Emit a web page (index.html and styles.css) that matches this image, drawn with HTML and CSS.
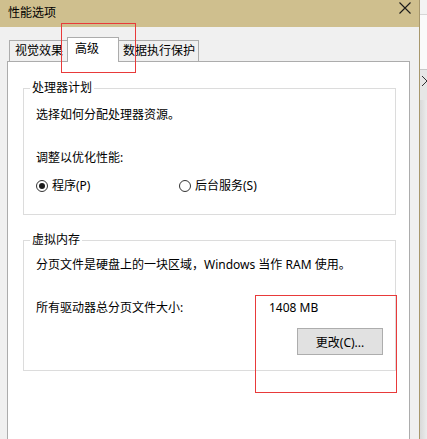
FILE: index.html
```html
<!DOCTYPE html>
<html lang="zh-CN">
<head>
<meta charset="utf-8">
<title>性能选项</title>
<link rel="stylesheet" href="styles.css">
</head>
<body>
<div class="screen">
  <div class="window">
    <div class="titlebar">
      <span class="title">性能选项</span>
      <svg class="close" width="12" height="12" viewBox="0 0 12 12"><path d="M0.5 0.5 L11.5 11.5 M11.5 0.5 L0.5 11.5" stroke="#1a1a1a" stroke-width="1.1" fill="none"/></svg>
    </div>
    <div class="client">
      <div class="tabs">
        <div class="tab tab-first">视觉效果</div>
        <div class="tab tab-active">高级</div>
        <div class="tab tab-last">数据执行保护</div>
      </div>
      <div class="panel">
        <fieldset class="group group-cpu">
          <legend>处理器计划</legend>
          <p class="row">选择如何分配处理器资源。</p>
          <p class="row row-gap">调整以优化性能:</p>
          <div class="row radios">
            <label class="radio radio-first"><span class="dot checked"></span>程序(P)</label>
            <label class="radio"><span class="dot"></span>后台服务(S)</label>
          </div>
        </fieldset>
        <fieldset class="group group-vm">
          <legend>虚拟内存</legend>
          <p class="row">分页文件是硬盘上的一块区域，Windows 当作 RAM 使用。</p>
          <div class="row row-gap size-row"><span class="size-label">所有驱动器总分页文件大小:</span><span>1408 MB</span></div>
          <div class="btn-row"><button class="btn">更改(C)...</button></div>
        </fieldset>
      </div>
    </div>
  </div>
  <div class="outside">
    <div class="seg seg1"></div>
    <div class="seg seg2"></div>
    <div class="seg seg3"><svg width="7" height="12" viewBox="0 0 7 12"><path d="M1 1 L6 6 L1 11" stroke="#333" stroke-width="1" fill="none"/></svg></div>
    <div class="seg seg4"></div>
  </div>
  <div class="mark mark-tab"></div>
  <div class="mark mark-size"></div>
</div>
</body>
</html>
```

FILE: styles.css
```css
* { box-sizing: border-box; }
html, body { margin: 0; padding: 0; }
body {
  font-family: "Noto Sans", "Noto Sans CJK SC", sans-serif;
  font-size: 12px;
  color: #000;
  background: #f0f0f0;
}
.screen {
  position: relative;
  display: flex;
  width: 427px;
  height: 439px;
  overflow: hidden;
}
.window {
  width: 420px;
  display: flex;
  flex-direction: column;
  border-right: 1px solid #a7976c;
}
.titlebar {
  height: 27px;
  background: #cfbf8e;
  display: flex;
  align-items: center;
  justify-content: space-between;
  padding: 0 8px 1px 8px;
}
.title { line-height: 16px; }
.close { margin-bottom: 10px; margin-right: 0; }
.client {
  flex: 1;
  background: #f0f0f0;
  padding: 10px 9px 0 7px;
  display: flex;
  flex-direction: column;
}
.tabs {
  display: flex;
  align-items: flex-end;
  margin-left: 2px;
  height: 24px;
}
.tab {
  height: 21px;
  line-height: 19px;
  border: 1px solid #acacac;
  border-bottom: none;
  background: #f0f0f0;
  white-space: nowrap;
}
.tab-first { width: 58px; border-right: none; padding-left: 5px; }
.tab-active {
  width: 52px;
  height: 25px;
  line-height: 22px;
  padding-left: 7px;
  background: #fff;
  margin-bottom: -1px;
  position: relative;
  z-index: 1;
}
.tab-last { width: 80px; border-left: none; padding-left: 4px; }
.panel {
  flex: 1;
  background: #fff;
  border: 1px solid #acacac;
  border-bottom: none;
  display: flex;
  flex-direction: column;
}
.group {
  margin: 18px 13px 0 15px;
  border: 1px solid #dcdcdc;
  min-width: 0;
}
.group legend {
  padding: 0 2px;
  margin-left: -6px;
  line-height: 16px;
}
.group-cpu { padding: 11px 12px 20px 12px; }
.group-vm { margin-top: 17px; padding: 9px 12px 15px 12px; }
.row { margin: 0; line-height: 16px; height: 16px; white-space: nowrap; }
.row-gap { margin-top: 27px; }
.radios { display: flex; align-items: center; margin-top: 12px; }
.radio { display: flex; align-items: center; gap: 4px; }
.radio-first { width: 143px; }
.dot {
  width: 12px;
  height: 12px;
  border-radius: 50%;
  border: 1px solid #333;
  background: #fff;
  display: flex;
  align-items: center;
  justify-content: center;
}
.dot.checked::after {
  content: "";
  width: 6px;
  height: 6px;
  border-radius: 50%;
  background: #1a1a1a;
}
.size-row { display: flex; }
.size-label { width: 233px; }
.btn-row { margin-top: 12px; display: flex; }
.btn {
  margin-left: 261px;
  width: 86px;
  height: 27px;
  padding: 0;
  background: #e1e1e1;
  border: 1px solid #adadad;
  font: inherit;
  color: #000;
}
.outside {
  width: 7px;
  display: flex;
  flex-direction: column;
}
.seg1 { height: 15px; background: #f3f3f3; border-bottom: 1px solid #d6d6d6; }
.seg2 { height: 55px; background: #fafafa; border-bottom: 1px solid #c8c8c8; }
.seg3 { height: 30px; background: #e6e6e6; padding-top: 5px; padding-left: 1px; }
.seg3 svg { display: block; }
.seg4 { flex: 1; background: linear-gradient(to right, #d9d9d9, #ececec); }
.mark {
  position: absolute;
  border: 1px solid #e83a3a;
  pointer-events: none;
}
.mark-tab { left: 61px; top: 23px; width: 75px; height: 50px; }
.mark-size { left: 255px; top: 295px; width: 142px; height: 98px; }
```
